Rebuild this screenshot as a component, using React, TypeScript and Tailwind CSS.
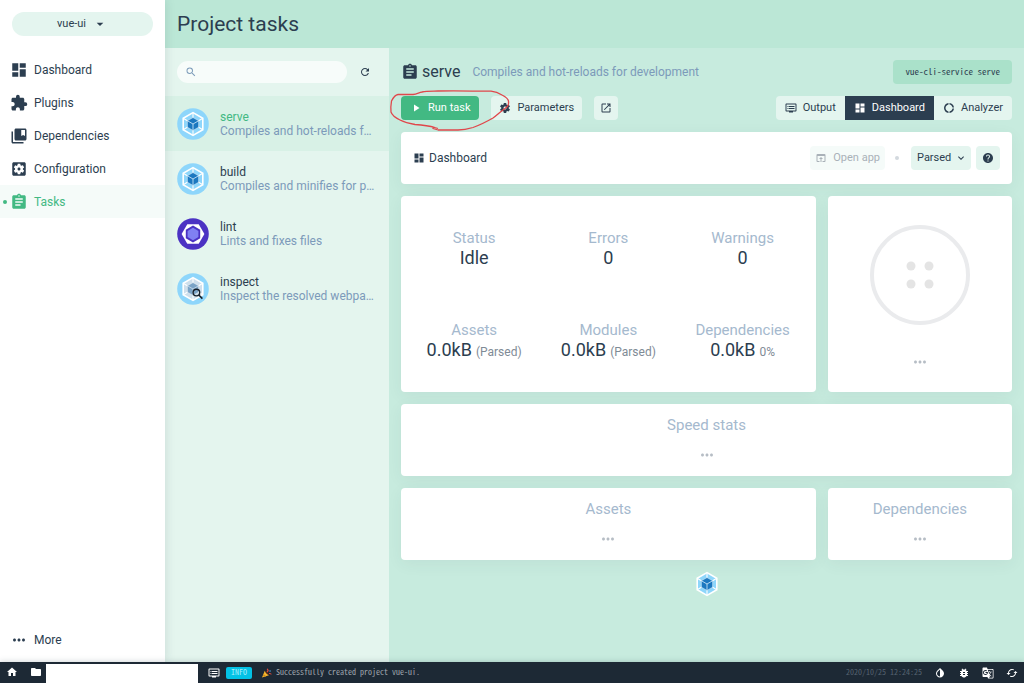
import { ReactNode } from "react";
import {
  MdArrowDropDown,
  MdCached,
  MdDashboard,
  MdDonutLarge,
  MdDvr,
  MdExpandMore,
  MdExtension,
  MdFolder,
  MdGTranslate,
  MdHelp,
  MdHome,
  MdInvertColors,
  MdLaunch,
  MdMoreHoriz,
  MdOpenInBrowser,
  MdPlayArrow,
  MdRefresh,
  MdSearch,
} from "react-icons/md";

interface IconProps {
  className?: string;
}

interface NavItem {
  label: string;
  icon: (props: IconProps) => ReactNode;
  active?: boolean;
}

interface Task {
  name: string;
  description: string;
  icon: ReactNode;
  active?: boolean;
}

interface Stat {
  label: string;
  value: string;
  info?: string;
}

// classic filled material shapes
const AssignmentIcon = ({ className }: IconProps) => (
  <svg viewBox="0 0 24 24" fill="currentColor" className={className}>
    <path d="M19 3h-4.18C14.4 1.84 13.3 1 12 1c-1.3 0-2.4.84-2.82 2H5c-1.1 0-2 .9-2 2v14c0 1.1.9 2 2 2h14c1.1 0 2-.9 2-2V5c0-1.1-.9-2-2-2zm-7 0c.55 0 1 .45 1 1s-.45 1-1 1-1-.45-1-1 .45-1 1-1zm2 14H7v-2h7v2zm3-4H7v-2h10v2zm0-4H7V7h10v2z" />
  </svg>
);

const ConfigurationIcon = ({ className }: IconProps) => (
  <svg viewBox="0 0 24 24" fill="currentColor" className={className}>
    <path d="M12 10c-1.1 0-2 .9-2 2s.9 2 2 2 2-.9 2-2-.9-2-2-2zm7-7H5c-1.11 0-2 .9-2 2v14c0 1.1.89 2 2 2h14c1.11 0 2-.9 2-2V5c0-1.1-.89-2-2-2zm-1.75 9c0 .23-.02.46-.05.68l1.48 1.16c.13.11.17.3.08.45l-1.4 2.42c-.09.15-.27.21-.43.15l-1.74-.7c-.36.28-.76.51-1.18.69l-.26 1.85c-.03.17-.18.3-.35.3h-2.8c-.17 0-.32-.13-.35-.29l-.26-1.85c-.43-.18-.82-.41-1.18-.69l-1.74.7c-.16.06-.34 0-.43-.15l-1.4-2.42c-.09-.15-.05-.34.08-.45l1.48-1.16c-.03-.23-.05-.46-.05-.69 0-.23.02-.46.05-.68l-1.48-1.16c-.13-.11-.17-.3-.08-.45l1.4-2.42c.09-.15.27-.21.43-.15l1.74.7c.36-.28.76-.51 1.18-.69l.26-1.85c.03-.17.18-.3.35-.3h2.8c.17 0 .32.13.35.29l.26 1.85c.43.18.82.41 1.18.69l1.74-.7c.16-.06.34 0 .43.15l1.4 2.42c.09.15.05.34-.08.45l-1.48 1.16c.03.23.05.46.05.69z" />
  </svg>
);

const BookmarksIcon = ({ className }: IconProps) => (
  <svg viewBox="0 0 24 24" fill="currentColor" className={className}>
    <path d="M4 6H2v14c0 1.100.9 2 2 2h14v-2H4V6z" />
    <path d="M20 2H8c-1.100 0-2 .9-2 2v12c0 1.100.9 2 2 2h12c1.100 0 2-.9 2-2V4c0-1.100-.9-2-2-2zm0 10l-2.500-1.500L15 12V4h5v8z" />
  </svg>
);

const SettingsIcon = ({ className }: IconProps) => (
  <svg viewBox="0 0 24 24" fill="currentColor" className={className}>
    <path d="M19.43 12.98c.04-.32.07-.64.07-.98s-.03-.66-.07-.98l2.11-1.65c.19-.15.24-.42.12-.64l-2-3.46c-.12-.22-.39-.3-.61-.22l-2.49 1c-.52-.4-1.08-.73-1.69-.98l-.38-2.65C14.46 2.18 14.25 2 14 2h-4c-.25 0-.46.18-.49.42l-.38 2.65c-.61.25-1.17.59-1.69.98l-2.49-1c-.23-.09-.49 0-.61.22l-2 3.46c-.13.22-.07.49.12.64l2.11 1.65c-.04.32-.07.65-.07.98s.03.66.07.98l-2.11 1.65c-.19.15-.24.42-.12.64l2 3.46c.12.22.39.3.61.22l2.49-1c.52.4 1.08.73 1.69.98l.38 2.65c.03.24.24.42.49.42h4c.25 0 .46-.18.49-.42l.38-2.65c.61-.25 1.17-.59 1.69-.98l2.49 1c.23.09.49 0 .61-.22l2-3.46c.12-.22.07-.49-.12-.64l-2.11-1.65zM12 15c-1.7 0-3-1.3-3-3s1.3-3 3-3 3 1.3 3 3-1.3 3-3 3z" />
  </svg>
);

const BugIcon = ({ className }: IconProps) => (
  <svg viewBox="0 0 24 24" fill="currentColor" className={className}>
    <path d="M20 8h-2.81c-.45-.78-1.07-1.45-1.82-1.96L17 4.41 15.59 3l-2.17 2.17C12.96 5.06 12.49 5 12 5c-.49 0-.96.06-1.41.17L8.41 3 7 4.41l1.62 1.63C7.88 6.55 7.26 7.22 6.81 8H4v2h2.09c-.05.33-.09.66-.09 1v1H4v2h2v1c0 .34.04.67.09 1H4v2h2.81c1.04 1.79 2.97 3 5.19 3s4.15-1.21 5.19-3H20v-2h-2.09c.05-.33.09-.66.09-1v-1h2v-2h-2v-1c0-.34-.04-.67-.09-1H20V8zm-6 8h-4v-2h4v2zm0-4h-4v-2h4v2z" />
  </svg>
);

const WebpackCube = ({ faded = false }: { faded?: boolean }) => (
  <g>
    <path d="M16 3.7 26.6 9.8V22.2L16 28.3 5.4 22.2V9.8Z" fill="#fff" />
    <path
      d="M16 5.6 25 10.8V21.2L16 26.4 7 21.2V10.8Z"
      fill={faded ? "#cfdfec" : "#8ed6fb"}
    />
    <path
      d="M16 5V10M25.4 10.6 21.2 13M25.4 21.4 21.2 19M16 27V22M6.6 21.4 10.8 19M6.6 10.6 10.8 13"
      stroke="#fff"
      strokeWidth="1.1"
    />
    <path
      d="M16 9.6 21.6 12.8V19.2L16 22.4 10.400 19.2V12.8Z"
      fill={faded ? "#7ba3c6" : "#1c78c0"}
      stroke="#fff"
      strokeWidth="0.6"
      strokeOpacity="0.7"
    />
    <path
      d="M16 16V22.3M16 16 10.5 12.8M16 16 21.5 12.8"
      stroke={faded ? "#cfdfec" : "#d8effc"}
      strokeWidth="0.8"
    />
  </g>
);

const WebpackIcon = () => (
  <svg viewBox="0 0 32 32" className="size-8 shrink-0" fill="none">
    <circle cx="16" cy="16" r="15.8" fill="#8ed6fb" />
    <WebpackCube />
  </svg>
);

const InspectIcon = () => (
  <svg viewBox="0 0 32 32" className="size-8 shrink-0" fill="none">
    <circle cx="16" cy="16" r="15.8" fill="#8ed6fb" />
    <WebpackCube faded />
    <circle cx="19.4" cy="19.6" r="3.3" stroke="#17202a" strokeWidth="1.4" />
    <path d="M21.8 22 25.4 25.6" stroke="#17202a" strokeWidth="1.6" />
  </svg>
);

const EslintIcon = () => (
  <svg viewBox="0 0 32 32" className="size-8 shrink-0">
    <circle cx="16" cy="16" r="15.8" fill="#4b32c3" />
    <path d="M4.6 16 10.3 6.2H21.7L27.4 16 21.7 25.8H10.3Z" fill="#fff" />
    <path d="M16 7.6 23.2 11.8V20.2L16 24.4 8.8 20.2V11.8Z" fill="#4b32c3" />
    <path d="M16 9.8 21.4 12.9V19.1L16 22.2 10.6 19.1V12.9Z" fill="#8080f2" />
  </svg>
);

const PartyIcon = () => (
  <svg viewBox="0 0 18 18" className="size-2.5 shrink-0">
    <path d="M0 17 5 5 12.5 13Z" fill="#f8b62d" />
    <path d="M3 11 7.5 15 4.500 16 1.800 13.500Z" fill="#c98a1c" />
    <path d="M5 5C8 5 12 9 12.5 13 9 12 6 9 5 5Z" fill="#4a2a1c" />
    <path d="M9.5 1.5 11 5 9 7.500" stroke="#e2483c" strokeWidth="2.2" fill="none" />
    <path d="M12.500 9.500 17 11" stroke="#e2483c" strokeWidth="1.8" />
    <circle cx="14.5" cy="5.5" r="1.4" fill="#4fa8e0" />
  </svg>
);

const navItems: NavItem[] = [
  { label: "Dashboard", icon: MdDashboard },
  { label: "Plugins", icon: MdExtension },
  { label: "Dependencies", icon: BookmarksIcon },
  { label: "Configuration", icon: ConfigurationIcon },
  { label: "Tasks", icon: AssignmentIcon, active: true },
];

const tasks: Task[] = [
  {
    name: "serve",
    description: "Compiles and hot-reloads for development",
    icon: <WebpackIcon />,
    active: true,
  },
  {
    name: "build",
    description: "Compiles and minifies for production",
    icon: <WebpackIcon />,
  },
  { name: "lint", description: "Lints and fixes files", icon: <EslintIcon /> },
  {
    name: "inspect",
    description: "Inspect the resolved webpack config",
    icon: <InspectIcon />,
  },
];

const stats: Stat[] = [
  { label: "Status", value: "Idle" },
  { label: "Errors", value: "0" },
  { label: "Warnings", value: "0" },
  { label: "Assets", value: "0.0kB", info: "(Parsed)" },
  { label: "Modules", value: "0.0kB", info: "(Parsed)" },
  { label: "Dependencies", value: "0.0kB", info: "0%" },
];

const Sidebar = () => (
  <aside className="relative z-10 flex w-[165px] shrink-0 flex-col bg-white shadow-[0_0_10px_rgba(44,62,80,0.15)]">
    <div className="px-3 pt-3">
      <button className="flex h-6 w-full items-center justify-center gap-1.5 rounded-full bg-[#e4f5ef] text-[11px]">
        vue-ui
        <MdArrowDropDown className="size-4" />
      </button>
    </div>

    <nav className="mt-[17px] flex flex-1 flex-col">
      {navItems.map(({ label, icon: Icon, active }) => (
        <a
          key={label}
          href="#"
          className={
            active
              ? "flex h-[33px] items-center bg-[#f5fbf9] text-[#42b983]"
              : "flex h-[33px] items-center"
          }
        >
          <span className="flex w-2.5 shrink-0 justify-center">
            {active && <span className="size-1 rounded-full bg-[#42b983]" />}
          </span>
          <Icon className="size-[18px]" />
          <span className="ml-1.5">{label}</span>
        </a>
      ))}
    </nav>

    <button className="mb-1.5 flex h-[33px] items-center pl-2.5">
      <MdMoreHoriz className="size-[18px]" />
      <span className="ml-1.5">More</span>
    </button>
  </aside>
);

const TaskList = () => (
  <section className="flex w-56 shrink-0 flex-col bg-[#e4f5ee]">
    <div className="flex h-12 items-center px-3">
      <label className="flex h-[22px] flex-1 items-center rounded-full bg-[#f7fcfa] pl-2">
        <MdSearch className="size-3 text-[#7d9cba]" />
        <input
          type="text"
          aria-label="Search task"
          className="ml-1.5 w-0 flex-1 bg-transparent text-[11px] outline-none"
        />
      </label>
      <button
        aria-label="Refresh"
        className="ml-1.5 flex size-6 items-center justify-center"
      >
        <MdRefresh className="size-3" />
      </button>
    </div>

    {tasks.map((task) => (
      <a
        key={task.name}
        href="#"
        className={
          task.active
            ? "flex h-[55px] items-center gap-[11px] bg-[#d8f1e6] px-3 text-[#42b983]"
            : "flex h-[55px] items-center gap-[11px] px-3"
        }
      >
        {task.icon}
        <span className="min-w-0 leading-[14px]">
          <span className="block">{task.name}</span>
          <span className="block truncate text-[#7c9aba]">
            {task.description}
          </span>
        </span>
      </a>
    ))}
  </section>
);

const Card = ({
  className = "",
  children,
}: {
  className?: string;
  children: ReactNode;
}) => (
  <div
    className={`rounded bg-white shadow-[0_4px_16px_rgba(44,62,80,0.06)] ${className}`}
  >
    {children}
  </div>
);

const EmptyCard = ({ title, className = "" }: { title: string; className?: string }) => (
  <Card className={`flex h-[72px] flex-col items-center pt-3 ${className}`}>
    <h3 className="text-[15px] leading-[18px] text-[#a5b9ce]">{title}</h3>
    <MdMoreHoriz className="mt-3 size-[18px] text-[#b6bdc5]" />
  </Card>
);

const TaskActions = () => (
  <div className="relative flex items-center">
    <button className="flex h-6 items-center gap-1.5 rounded-sm bg-[#42b983] px-[9px] text-[11px] text-white">
      <MdPlayArrow className="size-3" />
      Run task
    </button>
    <button className="ml-3 flex h-6 items-center gap-1.5 rounded-sm bg-[#e4f5ef] px-2 text-[11px]">
      <SettingsIcon className="size-3" />
      Parameters
    </button>
    <button
      aria-label="Open in new window"
      className="ml-3 flex size-6 items-center justify-center rounded-sm bg-[#e4f5ef]"
    >
      <MdLaunch className="size-3" />
    </button>

    {/* hand-drawn highlight around the run button */}
    <svg
      viewBox="0 0 122 44"
      className="pointer-events-none absolute -top-2 -left-3 h-11 w-[122px]"
      fill="none"
      stroke="#e0474b"
      strokeWidth="1.3"
      strokeLinejoin="round"
    >
      <path d="M49 42 44 40.500 44 39 49 40.500M46 39.500C41 38 34 37 26 36.500 20 35.500 15 34 11 32 7 30 3 27 2 24 1.500 20 2 16 2.500 13 4 10 6 7 9 6.500H24C28 6 30 4.500 33 4 38 3 44 3.200 49 3 65 2.500 85 3 102 3.200 106 3.500 110 5 113 7 116 8.500 119 10.500 119.500 13 120 17 119 19 114 22 111 24 107 28 104 30 97 34 91 37 84 39.500 79 41 74 42 69 42H49" />
    </svg>
  </div>
);

const ViewTabs = () => (
  <div className="flex overflow-hidden rounded-sm bg-[#e4f5ef] text-[11px]">
    <button className="flex h-6 items-center gap-1.5 px-[9px]">
      <MdDvr className="size-3" />
      Output
    </button>
    <button className="flex h-6 items-center gap-1.5 bg-[#2c3e50] px-[9px] text-white">
      <MdDashboard className="size-3" />
      Dashboard
    </button>
    <button className="flex h-6 items-center gap-1.5 px-[9px]">
      <MdDonutLarge className="size-3" />
      Analyzer
    </button>
  </div>
);

const TaskDetails = () => (
  <section className="flex min-w-0 flex-1 flex-col bg-[#c7ebde] px-3">
    <div className="flex h-12 items-center">
      <AssignmentIcon className="size-[18px]" />
      <h2 className="ml-[3px] text-base">serve</h2>
      <p className="ml-3 text-[#7c9aba]">
        Compiles and hot-reloads for development
      </p>
      <code className="ml-auto rounded-sm bg-[#aae1ca] px-3 font-['Noto_Sans_CJK_JP',monospace] text-[9px] leading-6 [font-feature-settings:'hwid']">
        vue-cli-service serve
      </code>
    </div>

    <div className="flex justify-between">
      <TaskActions />
      <ViewTabs />
    </div>

    <Card className="mt-3 flex h-[52px] items-center px-3">
      <MdDashboard className="size-3" />
      <h3 className="ml-1">Dashboard</h3>
      <button
        disabled
        className="ml-auto flex h-6 items-center gap-1.5 rounded-sm bg-[#f5fbf9] px-[5px] text-[11px] text-[#a9b1b8]"
      >
        <MdOpenInBrowser className="size-3" />
        Open app
      </button>
      <span className="mr-3 ml-2.5 size-1 rounded-full bg-[#d3d9de]" />
      <div className="relative">
        <select
          aria-label="Size"
          className="h-6 w-[60px] appearance-none rounded-sm bg-[#e4f5ef] pl-1.5 text-[11px]"
        >
          <option>Parsed</option>
          <option>Stats</option>
          <option>Gzip</option>
        </select>
        <MdExpandMore className="pointer-events-none absolute top-1.5 right-1 size-3" />
      </div>
      <button
        aria-label="Help"
        className="ml-[5px] flex size-6 items-center justify-center rounded-sm bg-[#e4f5ef]"
      >
        <MdHelp className="size-3" />
      </button>
    </Card>

    <div className="mt-3 grid grid-cols-[9fr_4fr] gap-3">
      <Card className="grid h-[196px] grid-cols-3 p-1.5">
        {stats.map((stat) => (
          <div
            key={stat.label}
            className="flex flex-col items-center justify-center"
          >
            <div className="text-[15px] leading-5 text-[#a5b9ce]">
              {stat.label}
            </div>
            <div className="text-lg leading-5">
              {stat.value}
              {stat.info && (
                <span className="ml-1 text-xs text-[#7f8b96]">{stat.info}</span>
              )}
            </div>
          </div>
        ))}
      </Card>

      <Card className="flex flex-col items-center pt-7">
        <svg viewBox="0 0 102 102" className="size-[102px]">
          <circle cx="51" cy="51" r="48" fill="none" stroke="#eaebed" strokeWidth="4" />
          <g fill="#e4e4e4">
            <circle cx="42" cy="42" r="4.500" />
            <circle cx="60" cy="42" r="4.500" />
            <circle cx="42" cy="60" r="4.500" />
            <circle cx="60" cy="60" r="4.500" />
          </g>
        </svg>
        <MdMoreHoriz className="mt-[27px] size-[18px] text-[#b6bdc5]" />
      </Card>

      <EmptyCard title="Speed stats" className="col-span-2" />
      <EmptyCard title="Assets" />
      <EmptyCard title="Dependencies" />
    </div>

    <svg
      viewBox="4 4 24 24"
      className="mt-3 size-6 self-center overflow-visible"
      fill="none"
    >
      <WebpackCube />
    </svg>
  </section>
);

const StatusBar = () => (
  <footer className="relative z-20 flex h-[21px] shrink-0 items-center bg-[#1d2935] pl-1.5 font-['Noto_Sans_CJK_JP',monospace] text-[8px] text-white shadow-[0_0_6px_rgba(44,62,80,0.25)] [font-feature-settings:'hwid']">
    <button aria-label="Home" className="flex w-6 pb-px">
      <MdHome className="size-3" />
    </button>
    <button aria-label="Folder" className="flex w-4 pb-px">
      <MdFolder className="size-3" />
    </button>
    <div className="h-[19px] w-[152px] self-end bg-white" />
    <MdDvr className="ml-2.5 size-3" />
    <span className="ml-1.5 flex h-3 w-[26px] items-center justify-center rounded-xs bg-[#03c2e6] text-[#a5ecfa]">
      INFO
    </span>
    <span className="ml-2.5 flex items-center">
      <PartyIcon />
    </span>
    <span className="ml-1 text-[#a0a8af]">
      Successfully created project vue-ui.
    </span>
    <span className="mr-1.5 ml-auto text-[#566370]">2020/10/25 12:24:25</span>
    {[
      { label: "Toggle dark theme", icon: MdInvertColors },
      { label: "Report bug", icon: BugIcon },
      { label: "Translate", icon: MdGTranslate },
      { label: "Reset", icon: MdCached },
    ].map(({ label, icon: Icon }) => (
      <button
        key={label}
        aria-label={label}
        className="flex h-full w-6 items-center justify-center"
      >
        <Icon className="size-3" />
      </button>
    ))}
  </footer>
);

export default function App() {
  return (
    <div className="flex min-h-screen flex-col font-[Roboto,sans-serif] text-xs text-[#2c3e50]">
      <div className="flex flex-1">
        <Sidebar />
        <div className="flex min-w-0 flex-1 flex-col">
          <header className="flex h-12 items-center bg-[#bbe7d6] px-3">
            <h1 className="text-[21px]">Project tasks</h1>
          </header>
          <main className="flex flex-1">
            <TaskList />
            <TaskDetails />
          </main>
        </div>
      </div>
      <StatusBar />
    </div>
  );
}
